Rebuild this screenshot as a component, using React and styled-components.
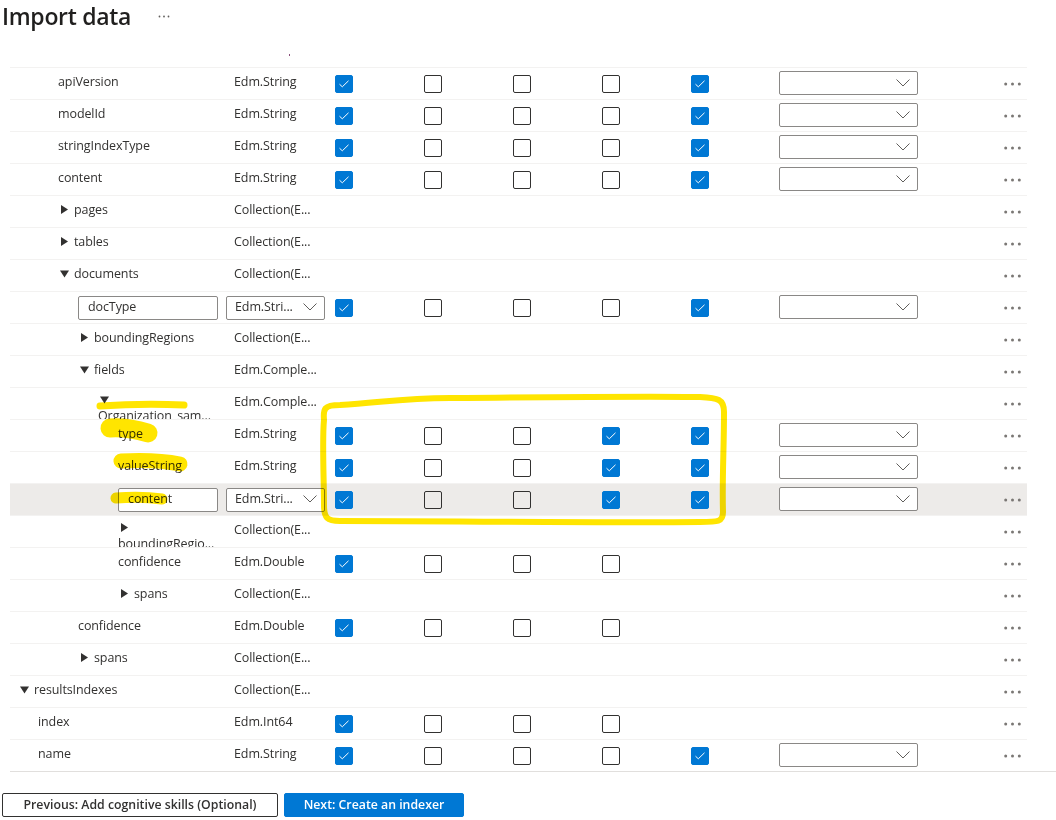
import React from "react";
import styled, { createGlobalStyle } from "styled-components";

const GlobalStyle = createGlobalStyle`
  html, body {
    margin: 0;
    padding: 0;
    background: #ffffff;
  }
  body {
    font-family: "Open Sans", "Noto Sans", sans-serif;
    color: #323130;
  }
`;

const Page = styled.div`
  position: relative;
  width: 1056px;
  height: 820px;
  overflow: hidden;
`;

const Header = styled.div`
  display: flex;
  align-items: center;
  height: 35px;
  padding-left: 2px;
`;

const Title = styled.h1`
  margin: 0;
  font-size: 23px;
  line-height: 32px;
  font-weight: 600;
  letter-spacing: -0.3px;
  color: #201f1e;
  align-self: flex-start;
`;

const TitleMore = styled.span`
  display: flex;
  margin-left: 27px;
  margin-top: -2px;
`;

const Table = styled.div`
  margin-left: 10px;
  width: 1017px;
`;

const Spacer = styled.div`
  position: relative;
  height: 32px;
`;

const Speck = styled.span`
  position: absolute;
  left: 279px;
  top: 19px;
  width: 1px;
  height: 2px;
  background: #8a4d7a;
`;

const Row = styled.div`
  display: grid;
  grid-template-columns: 216px 108px repeat(5, 89px) 139px 1fr;
  height: 32px;
  box-sizing: border-box;
  border-top: 1px solid #f3f2f1;
  align-items: center;
  background: ${p => (p.$selected ? "#edebe9" : "transparent")};
  font-size: 12.5px;
  letter-spacing: -0.1px;
  line-height: 16px;
`;

const NameCell = styled.div`
  display: ${p => (p.$wrap ? "block" : "flex")};
  align-items: center;
  align-self: ${p => (p.$wrap ? "stretch" : "center")};
  padding-left: ${p => p.$indent}px;
  padding-top: ${p => (p.$wrap ? "4px" : "0")};
  padding-bottom: ${p => (p.$wrap || p.$edit ? "0" : "4px")};
  overflow: hidden;
  white-space: nowrap;
  box-sizing: border-box;
`;

const Caret = styled.span`
  display: inline-flex;
  width: 14px;
  height: ${p => (p.$wrap ? "12px" : "16px")};
  align-items: center;
  flex: none;
`;

const NameText = styled.span`
  display: block;
  margin-left: ${p => (p.$wrap ? "-2px" : "0")};
`;

const TypeCell = styled.div`
  padding-left: 8px;
  padding-bottom: 4px;
  white-space: nowrap;
  overflow: hidden;
`;

const TypeSelectCell = styled.div`
  display: flex;
`;

const TextBox = styled.div`
  box-sizing: border-box;
  width: ${p => p.$width}px;
  height: 24px;
  border: 1px solid #8a8886;
  border-radius: 2px;
  background: #ffffff;
  padding-left: 9px;
  padding-bottom: 2px;
  display: flex;
  align-items: center;
`;

const Select = styled.div`
  box-sizing: border-box;
  width: ${p => p.$width}px;
  height: 24px;
  border: 1px solid #8a8886;
  border-radius: 2px;
  background: #ffffff;
  padding: 0 7px 1px 8px;
  display: flex;
  align-items: center;
  justify-content: space-between;
  white-space: nowrap;
`;

const CheckCell = styled.div`
  padding-left: 1px;
  display: flex;
  margin-top: 1px;
`;

const Box = styled.span`
  box-sizing: border-box;
  width: 18px;
  height: 18px;
  border-radius: 2px;
  display: flex;
  align-items: center;
  justify-content: center;
  border: 1px solid ${p => (p.$checked ? "#0078d4" : "#323130")};
  background: ${p => (p.$checked ? "#0078d4" : "transparent")};
`;

const MapCell = styled.div`
  display: flex;
  margin-top: -1px;
`;

const MoreCell = styled.div`
  display: flex;
  justify-content: flex-end;
  padding-right: 6px;
`;

const Footer = styled.div`
  margin-left: 10px;
  border-top: 1px solid #e1dfdd;
  height: 48px;
`;

const Buttons = styled.div`
  display: flex;
  gap: 6px;
  padding-top: 21px;
  margin-left: -8px;
`;

const Button = styled.button`
  box-sizing: border-box;
  width: ${p => p.$width}px;
  height: 24px;
  border-radius: 2px;
  font-family: "Open Sans", "Noto Sans", sans-serif;
  font-size: 12.3px;
  font-weight: 600;
  padding: 0 0 1px;
  cursor: pointer;
  border: 1px solid ${p => (p.$primary ? "#0078d4" : "#323130")};
  background: ${p => (p.$primary ? "#0078d4" : "#ffffff")};
  color: ${p => (p.$primary ? "#ffffff" : "#323130")};
`;

const Marker = styled.svg`
  position: absolute;
  left: 0;
  top: 0;
  pointer-events: none;
  mix-blend-mode: multiply;
`;

const Triangle = ({ open }) => (
  <svg width="9" height="9" viewBox="0 0 9 9">
    {open ? (
      <path d="M0 1.5 L9 1.5 L4.5 8.5 Z" fill="#323130" />
    ) : (
      <path d="M1 0 L8 4.5 L1 9 Z" fill="#323130" />
    )}
  </svg>
);

const Check = () => (
  <svg width="12" height="10" viewBox="0 0 12 10">
    <path d="M1.5 5.2 L4.3 7.8 L10.5 1.8" fill="none" stroke="#ffffff" strokeWidth="1" />
  </svg>
);

const Chevron = () => (
  <svg width="14" height="8" viewBox="0 0 14 8">
    <path d="M0.5 0.5 L7 7 L13.5 0.5" fill="none" stroke="#605e5c" strokeWidth="1" />
  </svg>
);

const Dots = () => (
  <svg width="17" height="4" viewBox="0 0 17 4">
    <circle cx="1.7" cy="2" r="1.5" fill="#7a7774" />
    <circle cx="8.5" cy="2" r="1.5" fill="#7a7774" />
    <circle cx="15.3" cy="2" r="1.5" fill="#7a7774" />
  </svg>
);

const SmallDots = () => (
  <svg width="12" height="3" viewBox="0 0 12 3">
    <circle cx="1.5" cy="1.5" r="0.9" fill="#605e5c" />
    <circle cx="6" cy="1.5" r="0.9" fill="#605e5c" />
    <circle cx="10.5" cy="1.5" r="0.9" fill="#605e5c" />
  </svg>
);

const FULL = [1, 0, 0, 0, 1];
const KEY = [1, 0, 0, 1, 1];
const NUM = [1, 0, 0, 0];
const COL = "Collection(E...";

const rows = [
  { name: "apiVersion", level: 2, type: "Edm.String", checks: FULL, map: true },
  { name: "modelId", level: 2, type: "Edm.String", checks: FULL, map: true },
  { name: "stringIndexType", level: 2, type: "Edm.String", checks: FULL, map: true },
  { name: "content", level: 2, type: "Edm.String", checks: FULL, map: true },
  { name: "pages", level: 2, expand: "closed", type: COL },
  { name: "tables", level: 2, expand: "closed", type: COL },
  { name: "documents", level: 2, expand: "open", type: COL },
  { name: "docType", level: 3, edit: 140, type: "Edm.Stri...", checks: FULL, map: true },
  { name: "boundingRegions", level: 3, expand: "closed", type: COL },
  { name: "fields", level: 3, expand: "open", type: "Edm.Comple..." },
  { name: "Organization_sam...", level: 4, expand: "open", wrap: true, type: "Edm.Comple..." },
  { name: "type", level: 5, type: "Edm.String", checks: KEY, map: true },
  { name: "valueString", level: 5, type: "Edm.String", checks: KEY, map: true },
  { name: "content", level: 5, edit: 100, type: "Edm.Stri...", checks: KEY, map: true, selected: true },
  { name: "boundingRegio...", level: 5, expand: "closed", wrap: true, type: COL },
  { name: "confidence", level: 5, type: "Edm.Double", checks: NUM },
  { name: "spans", level: 5, expand: "closed", type: COL },
  { name: "confidence", level: 3, type: "Edm.Double", checks: NUM },
  { name: "spans", level: 3, expand: "closed", type: COL },
  { name: "resultsIndexes", level: 0, expand: "open", type: COL },
  { name: "index", level: 1, type: "Edm.Int64", checks: NUM },
  { name: "name", level: 1, type: "Edm.String", checks: FULL, map: true },
];

function FieldRow({ row }) {
  const indent = row.expand ? 10 + 20 * row.level : 8 + 20 * row.level;
  const cells = [0, 1, 2, 3, 4].map(i => {
    if (!row.checks || i >= row.checks.length) return <CheckCell key={i} />;
    const on = row.checks[i] === 1;
    return (
      <CheckCell key={i}>
        <Box $checked={on}>{on && <Check />}</Box>
      </CheckCell>
    );
  });

  return (
    <Row $selected={row.selected}>
      {row.edit ? (
        <NameCell $indent={indent} $edit>
          <TextBox $width={row.edit}>{row.name}</TextBox>
        </NameCell>
      ) : (
        <NameCell $indent={indent} $wrap={row.wrap}>
          {row.expand && (
            <Caret $wrap={row.wrap}>
              <Triangle open={row.expand === "open"} />
            </Caret>
          )}
          <NameText $wrap={row.wrap}>{row.name}</NameText>
        </NameCell>
      )}
      {row.edit ? (
        <TypeSelectCell>
          <Select $width={99}>
            {row.type}
            <Chevron />
          </Select>
        </TypeSelectCell>
      ) : (
        <TypeCell>{row.type}</TypeCell>
      )}
      {cells}
      <MapCell>
        {row.map && (
          <Select $width={139}>
            <span />
            <Chevron />
          </Select>
        )}
      </MapCell>
      <MoreCell>
        <Dots />
      </MoreCell>
    </Row>
  );
}

export default function App() {
  return (
    <Page>
      <GlobalStyle />
      <Header>
        <Title>Import data</Title>
        <TitleMore>
          <SmallDots />
        </TitleMore>
      </Header>

      <Table>
        <Spacer>
          <Speck />
        </Spacer>
        {rows.map((row, i) => (
          <FieldRow key={i} row={row} />
        ))}
      </Table>

      <Footer>
        <Buttons>
          <Button $width={276}>Previous: Add cognitive skills (Optional)</Button>
          <Button $width={180} $primary>Next: Create an indexer</Button>
        </Buttons>
      </Footer>

      <Marker width="1056" height="820" viewBox="0 0 1056 820">
        <g fill="none" stroke="#ffe500" strokeLinecap="round" strokeLinejoin="round">
          <path d="M100 406 C 130 404, 160 404, 184 405" strokeWidth="7" />
          <path d="M110 428 C 125 427, 138 430, 148 433" strokeWidth="19" />
          <path d="M121 461 C 140 460, 165 461, 180 464" strokeWidth="15" />
          <path d="M116 498 C 130 497, 148 497, 162 499" strokeWidth="11" />
          <path
            d="M324 420 C 323 409, 324 405, 340 405 C 380 403, 400 398, 450 398 C 550 397, 650 396, 700 397 C 718 398, 724 399, 724 412 C 724 450, 722 480, 723 512 C 723 522, 718 522, 700 522 C 600 523, 450 521, 340 521 C 327 521, 324 518, 324 505 C 324 480, 322 440, 324 420 Z"
            strokeWidth="6"
          />
        </g>
      </Marker>
    </Page>
  );
}
